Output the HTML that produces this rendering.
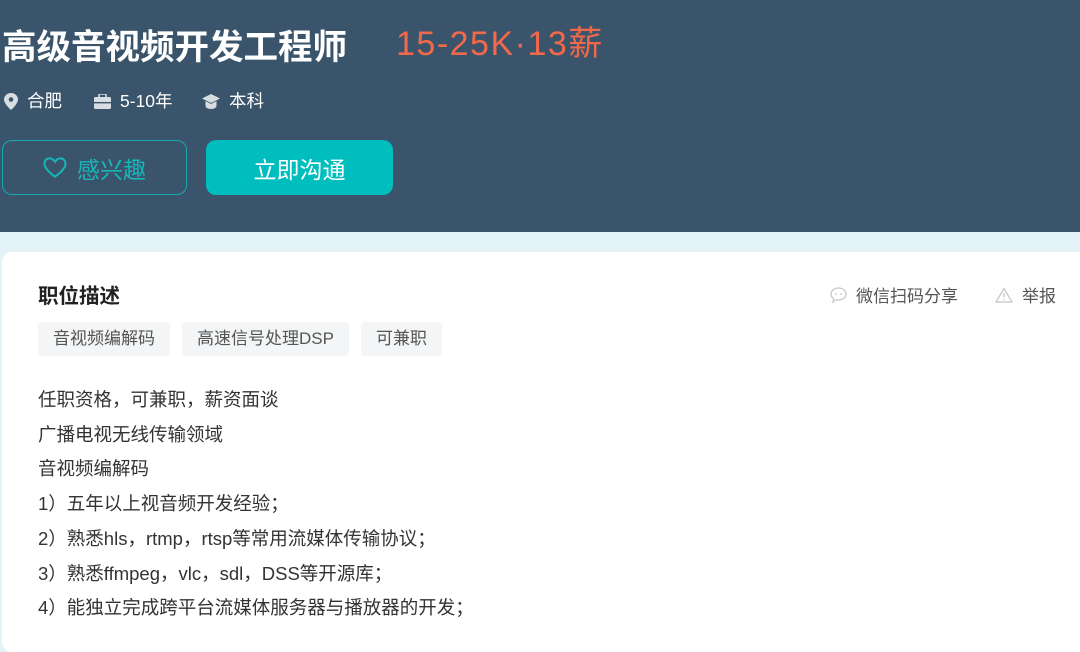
<!DOCTYPE html>
<html><head><meta charset="utf-8"><style>
*{margin:0;padding:0;box-sizing:border-box}
body{width:1080px;height:642px;overflow:hidden;background:#e3f2f6;font-family:"Liberation Sans","Noto Sans CJK SC",sans-serif;position:relative}
.hd{position:absolute;left:0;top:0;width:1080px;height:232px;background:#3a556b}
.t{position:absolute;left:2px;top:26px;font-size:34.5px;font-weight:bold;color:#fff;line-height:44px}
.s{position:absolute;left:396px;top:22px;font-size:34px;color:#f2684a;line-height:44px;letter-spacing:1.5px}
.m{position:absolute;top:90px;font-size:17.5px;color:#fff;line-height:22px;display:flex;align-items:center;gap:9px}
.b1{position:absolute;left:2px;top:140px;width:185px;height:55px;border:1.5px solid #16a9ad;border-radius:10px;color:#17b6b8;font-size:23px;display:flex;align-items:center;justify-content:center;gap:10px}
.b2{position:absolute;left:206px;top:140px;width:187px;height:55px;background:#00bebd;border-radius:10px;color:#fff;font-size:23px;display:flex;align-items:center;justify-content:center}
.card{position:absolute;left:2px;top:252px;width:1090px;height:400px;background:#fff;border-radius:10px}
.h{position:absolute;left:38px;top:279px;font-size:20.5px;font-weight:bold;color:#222}
.tag{position:absolute;top:322px;height:34px;background:#f3f5f6;border-radius:4px;color:#555;font-size:17px;line-height:34px;padding:0 15px}
.r{position:absolute;top:282px;font-size:17px;color:#555;display:flex;align-items:center;gap:9px}
.body{position:absolute;left:38px;top:383px;font-size:18.5px;color:#333;line-height:34.7px}
</style></head><body>
<div class="hd"></div>
<div class="t">高级音视频开发工程师</div>
<div class="s">15-25K·13薪</div>
<div class="m" style="left:4px"><svg width="14" height="17" viewBox="0 0 14 17"><path d="M7 0C3 0 0 3 0 6.5 0 11 7 17 7 17s7-6 7-10.5C14 3 11 0 7 0z" fill="#d8dde2"/><circle cx="7" cy="6.5" r="2.3" fill="#3a556b"/></svg><span>合肥</span></div>
<div class="m" style="left:94px"><svg width="17" height="15" viewBox="0 0 17 15"><rect x="5" y="0" width="7" height="4" rx="1" fill="none" stroke="#d8dde2" stroke-width="1.6"/><rect x="0" y="3" width="17" height="12" rx="1.5" fill="#d8dde2"/><rect x="0" y="8" width="17" height="1.4" fill="#3a556b"/></svg><span>5-10年</span></div>
<div class="m" style="left:202px"><svg width="18" height="15" viewBox="0 0 18 15"><path d="M9 0L0 4.5 9 9 18 4.5z" fill="#d8dde2"/><path d="M3.5 7v5c0 1.5 2.5 3 5.5 3s5.5-1.5 5.5-3V7L9 10z" fill="#d8dde2"/></svg><span>本科</span></div>
<div class="b1"><svg width="24" height="21" viewBox="0 0 26 23"><path d="M13 21.5S1.5 14 1.5 7.2C1.5 3.8 4 1.5 7 1.5c2.6 0 4.6 1.6 6 3.7 1.4-2.1 3.4-3.7 6-3.7 3 0 5.5 2.3 5.5 5.7C24.5 14 13 21.5 13 21.5z" fill="none" stroke="#17b6b8" stroke-width="2.2"/></svg>感兴趣</div>
<div class="b2">立即沟通</div>
<div class="card"></div>
<div class="h">职位描述</div>
<div class="r" style="left:830px"><svg width="17" height="16" viewBox="0 0 17 16"><path d="M8.5 1C4.4 1 1 3.8 1 7c0 1.8 1 3.4 2.6 4.5L3 15l3.5-2.3c.6.2 1.3.3 2 .3 4.1 0 7.5-2.7 7.5-6S12.6 1 8.5 1z" fill="none" stroke="#c4c8cc" stroke-width="1.3"/><circle cx="6" cy="7" r=".9" fill="#c4c8cc"/><circle cx="11" cy="7" r=".9" fill="#c4c8cc"/></svg>微信扫码分享</div>
<div class="r" style="left:995px"><svg width="18" height="16" viewBox="0 0 18 16"><path d="M9 1.5L1 15h16z" fill="none" stroke="#c4c8cc" stroke-width="1.3"/><path d="M9 6v4.5M9 12v1.2" stroke="#c4c8cc" stroke-width="1.4"/></svg>举报</div>
<div class="tag" style="left:38px">音视频编解码</div>
<div class="tag" style="left:182px">高速信号处理DSP</div>
<div class="tag" style="left:361px">可兼职</div>
<div class="body">任职资格，可兼职，薪资面谈<br>广播电视无线传输领域<br>音视频编解码<br>1）五年以上视音频开发经验；<br>2）熟悉hls，rtmp，rtsp等常用流媒体传输协议；<br>3）熟悉ffmpeg，vlc，sdl，DSS等开源库；<br>4）能独立完成跨平台流媒体服务器与播放器的开发；</div>
</body></html>
